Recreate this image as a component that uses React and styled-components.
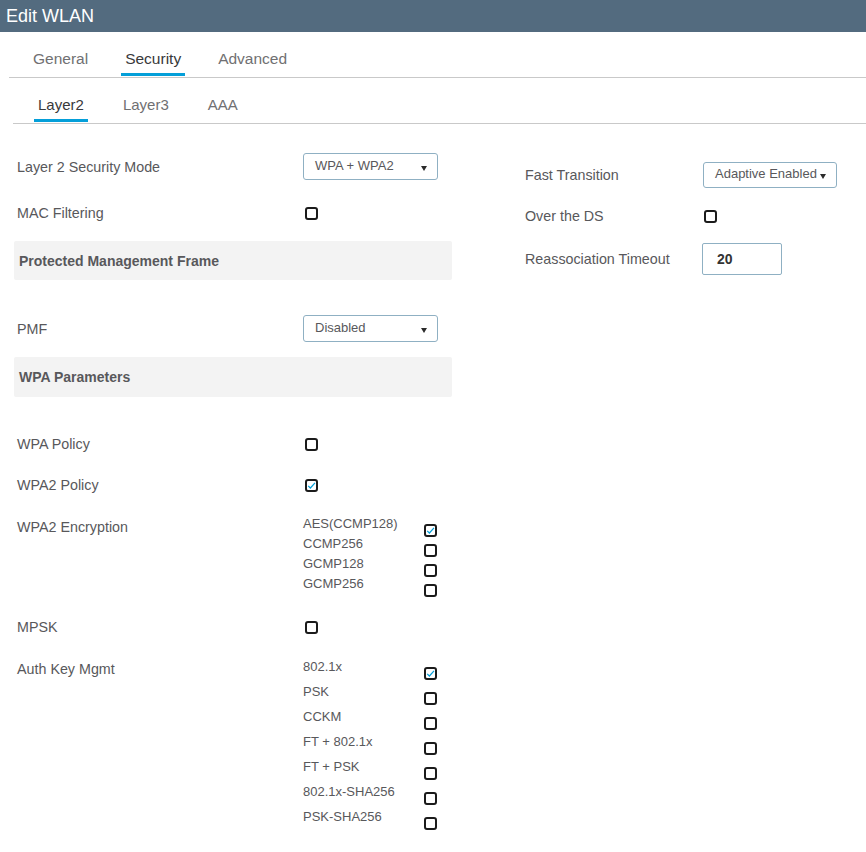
import React from "react";
import styled, { createGlobalStyle } from "styled-components";

const Global = createGlobalStyle`
  html, body { margin: 0; padding: 0; background: #fff; }
  body { font-family: "Liberation Sans", Arial, sans-serif; color: #58585b; }
  * { box-sizing: border-box; }
`;

const Page = styled.div`
  width: 866px;
  min-height: 852px;
  background: #fff;
  overflow: hidden;
`;

const Header = styled.div`
  height: 32px;
  background: #536b7f;
  color: #fff;
  font-size: 18px;
  line-height: 32px;
  padding-left: 6px;
`;

const TabBar = styled.div`
  display: flex;
  gap: ${(p) => p.$gap}px;
  margin-left: ${(p) => p.$inset}px;
  padding-left: ${(p) => p.$pad}px;
  height: ${(p) => p.$h}px;
  align-items: stretch;
  border-bottom: 1px solid #c9c9c9;
`;

const Tab = styled.div`
  padding: 0 4px;
  padding-top: ${(p) => p.$top}px;
  display: flex;
  align-items: flex-start;
  font-size: ${(p) => p.$size}px;
  color: ${(p) => (p.$active ? "#39393b" : "#707072")};
  border-bottom: 3px solid ${(p) => (p.$active ? "#049fd9" : "transparent")};
  margin-bottom: 1px;
`;

const Content = styled.div`
  display: flex;
  padding-left: 14px;
`;

const LeftCol = styled.div`
  width: 438px;
  display: flex;
  flex-direction: column;
`;

const RightCol = styled.div`
  margin-left: 70px;
  width: 340px;
  display: flex;
  flex-direction: column;
`;

const Row = styled.div`
  display: grid;
  grid-template-columns: ${(p) => p.$label}px 1fr;
  align-items: ${(p) => (p.$top ? "start" : "center")};
  height: ${(p) => (p.$h ? `${p.$h}px` : "auto")};
  margin-top: ${(p) => p.$mt}px;
  padding-left: 3px;
`;

const Label = styled.div`
  font-size: 14.3px;
  line-height: 20px;
  color: #58585b;
  margin-top: ${(p) => p.$mt || 0}px;
  white-space: nowrap;
`;

const Section = styled.div`
  background: #f3f3f3;
  height: ${(p) => p.$h}px;
  margin-top: ${(p) => p.$mt}px;
  padding-left: 5px;
  display: flex;
  align-items: center;
  font-size: 14px;
  font-weight: 700;
  color: #58585b;
  border-radius: 2px;
`;

const Select = styled.div`
  width: ${(p) => p.$w}px;
  height: ${(p) => p.$h}px;
  border: 1px solid #8fb0c3;
  border-radius: 3px;
  display: flex;
  align-items: center;
  justify-content: ${(p) => (p.$tight ? "flex-start" : "space-between")};
  padding: 0 10px 0 ${(p) => p.$pl}px;
  padding-bottom: 3px;
  font-size: 13px;
  color: #58585b;
  white-space: nowrap;
`;

const Caret = styled.span`
  width: 0;
  height: 0;
  border-left: 3.5px solid transparent;
  border-right: 3.5px solid transparent;
  border-top: 5px solid #2b2b2b;
  margin-top: 6px;
  margin-left: ${(p) => (p.$tight ? 3 : 0)}px;
`;

const Input = styled.div`
  width: 80px;
  height: 32px;
  border: 1px solid #8fb0c3;
  border-radius: 2px;
  display: flex;
  align-items: center;
  padding-left: 14px;
  font-size: 14px;
  font-weight: 700;
  color: #333;
`;

const Box = styled.span`
  display: inline-flex;
  align-items: center;
  justify-content: center;
  width: 13px;
  height: 13px;
  border: 2px solid #1b1b1b;
  border-radius: 3px;
  background: #fff;
`;

const Check = ({ on }) => (
  <Box>
    {on && (
      <svg width="9" height="9" viewBox="0 0 9 9">
        <path d="M1.2 4.8 L3.4 7 L8 1.8" fill="none" stroke="#049fd9" strokeWidth="1.2" />
      </svg>
    )}
  </Box>
);

const List = styled.div`
  display: flex;
  flex-direction: column;
`;

const Item = styled.div`
  display: grid;
  grid-template-columns: 121px 13px;
  align-items: start;
  height: ${(p) => p.$h}px;
  font-size: 13px;
  line-height: 20px;
  color: #58585b;
  white-space: nowrap;
`;

const ItemBox = styled.div`
  padding-top: 10px;
  line-height: 0;
`;

const CheckList = ({ items, h }) => (
  <List>
    {items.map(([t, on]) => (
      <Item key={t} $h={h}>
        <span>{t}</span>
        <ItemBox>
          <Check on={on} />
        </ItemBox>
      </Item>
    ))}
  </List>
);

const enc = [
  ["AES(CCMP128)", true],
  ["CCMP256", false],
  ["GCMP128", false],
  ["GCMP256", false],
];

const akm = [
  ["802.1x", true],
  ["PSK", false],
  ["CCKM", false],
  ["FT + 802.1x", false],
  ["FT + PSK", false],
  ["802.1x-SHA256", false],
  ["PSK-SHA256", false],
];

export default function App() {
  return (
    <Page>
      <Global />
      <Header>Edit WLAN</Header>
      <TabBar $inset={9} $pad={20} $gap={29} $h={46}>
        <Tab $size={15.5} $top={18}>General</Tab>
        <Tab $size={15.5} $top={18} $active>Security</Tab>
        <Tab $size={15.5} $top={18}>Advanced</Tab>
      </TabBar>
      <TabBar $inset={13} $pad={21} $gap={31} $h={46}>
        <Tab $size={15} $top={18} $active>Layer2</Tab>
        <Tab $size={15} $top={18}>Layer3</Tab>
        <Tab $size={15} $top={18}>AAA</Tab>
      </TabBar>
      <Content>
        <LeftCol>
          <Row $label={286} $mt={29} $h={27}>
            <Label>Layer 2 Security Mode</Label>
            <Select $w={135} $h={27} $pl={11}>
              WPA + WPA2
              <Caret />
            </Select>
          </Row>
          <Row $label={288} $mt={23} $h={20}>
            <Label>MAC Filtering</Label>
            <Check />
          </Row>
          <Section $mt={18} $h={39}>Protected Management Frame</Section>
          <Row $label={286} $mt={35} $h={27}>
            <Label>PMF</Label>
            <Select $w={135} $h={27} $pl={11}>
              Disabled
              <Caret />
            </Select>
          </Row>
          <Section $mt={15} $h={40}>WPA Parameters</Section>
          <Row $label={288} $mt={37} $h={20}>
            <Label>WPA Policy</Label>
            <Check />
          </Row>
          <Row $label={288} $mt={21} $h={20}>
            <Label>WPA2 Policy</Label>
            <Check on />
          </Row>
          <Row $label={286} $mt={19} $top>
            <Label $mt={3}>WPA2 Encryption</Label>
            <CheckList items={enc} h={20} />
          </Row>
          <Row $label={288} $mt={23} $h={20}>
            <Label>MPSK</Label>
            <Check />
          </Row>
          <Row $label={286} $mt={20} $top>
            <Label $mt={2}>Auth Key Mgmt</Label>
            <CheckList items={akm} h={25} />
          </Row>
        </LeftCol>
        <RightCol>
          <Row $label={178} $mt={38} $h={26}>
            <Label>Fast Transition</Label>
            <Select $w={134} $h={26} $pl={11} $tight>
              Adaptive Enabled
              <Caret $tight />
            </Select>
          </Row>
          <Row $label={179} $mt={18} $h={20}>
            <Label>Over the DS</Label>
            <Check />
          </Row>
          <Row $label={177} $mt={17} $h={32}>
            <Label>Reassociation Timeout</Label>
            <Input>20</Input>
          </Row>
        </RightCol>
      </Content>
    </Page>
  );
}
